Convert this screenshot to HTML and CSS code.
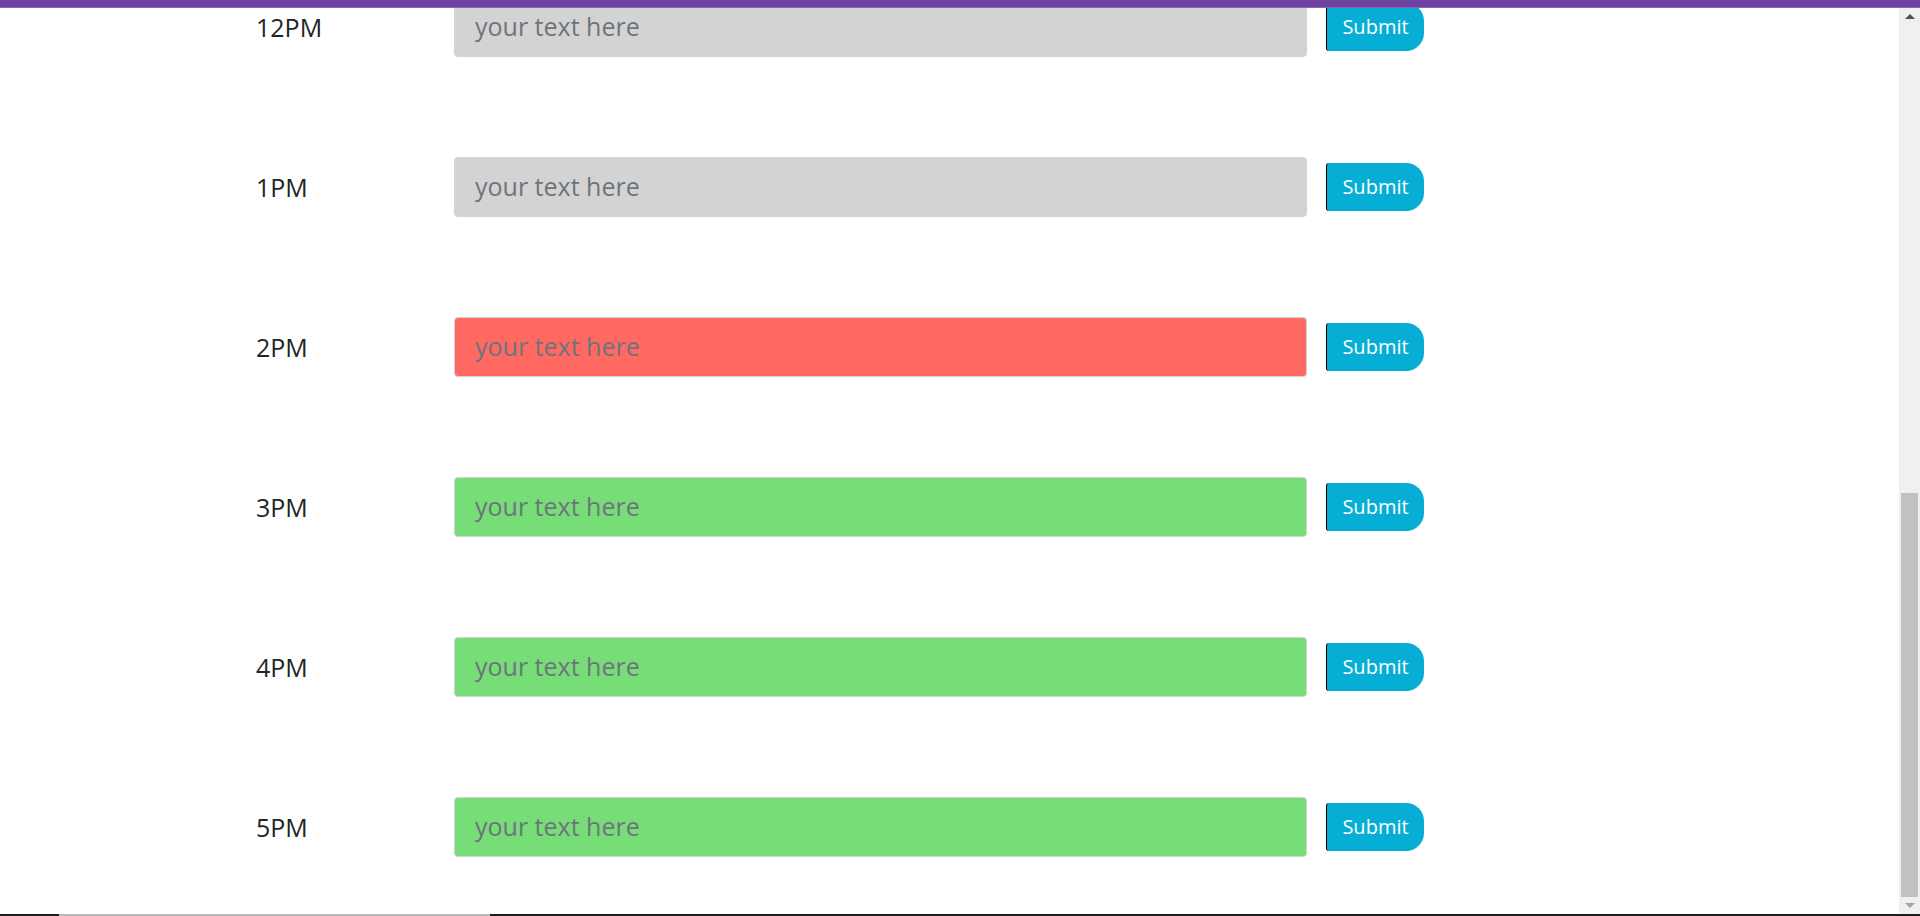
FILE: index.html
```html
<!DOCTYPE html>
<html lang="en">
<head>
<meta charset="utf-8">
<title>Work Day Scheduler</title>
<link rel="stylesheet" href="styles.css">
</head>
<body>
  <div class="topbar"></div>
  <div class="frame">
    <main class="viewport">
      <div class="schedule">
        <div class="time-block">
          <div class="hour">12PM</div>
          <textarea class="description past" placeholder="your text here"></textarea>
          <button class="saveBtn">Submit</button>
        </div>
        <div class="time-block">
          <div class="hour">1PM</div>
          <textarea class="description past" placeholder="your text here"></textarea>
          <button class="saveBtn">Submit</button>
        </div>
        <div class="time-block">
          <div class="hour">2PM</div>
          <textarea class="description present" placeholder="your text here"></textarea>
          <button class="saveBtn">Submit</button>
        </div>
        <div class="time-block">
          <div class="hour">3PM</div>
          <textarea class="description future" placeholder="your text here"></textarea>
          <button class="saveBtn">Submit</button>
        </div>
        <div class="time-block">
          <div class="hour">4PM</div>
          <textarea class="description future" placeholder="your text here"></textarea>
          <button class="saveBtn">Submit</button>
        </div>
        <div class="time-block">
          <div class="hour">5PM</div>
          <textarea class="description future" placeholder="your text here"></textarea>
          <button class="saveBtn">Submit</button>
        </div>
      </div>
    </main>
    <div class="scrollbar">
      <div class="sb-btn"><span class="arrow-up"></span></div>
      <div class="sb-track"><div class="sb-thumb"></div></div>
      <div class="sb-btn"><span class="arrow-down"></span></div>
    </div>
  </div>
  <div class="edge">
    <span class="seg dark seg-a"></span>
    <span class="seg light seg-b"></span>
    <span class="seg dark seg-c"></span>
  </div>
</body>
</html>
```

FILE: styles.css
```css
html, body {
  margin: 0;
  padding: 0;
  height: 916px;
  overflow: hidden;
  background: #ffffff;
}

body {
  display: flex;
  flex-direction: column;
  font-family: "Open Sans", "Noto Sans", sans-serif;
  color: #212529;
  line-height: 1;
}

.topbar {
  height: 8px;
  flex: none;
  background: #6f42a1;
  border-bottom: 1px solid #8a64b8;
  box-sizing: border-box;
}

.frame {
  flex: 1;
  display: flex;
  min-height: 0;
}

.viewport {
  flex: 1;
  overflow: hidden;
}

.schedule {
  margin-top: -61px;
  display: flex;
  flex-direction: column;
}

.time-block {
  height: 160px;
  display: flex;
  align-items: center;
}

.hour {
  width: 198px;
  margin-left: 256px;
  font-size: 25px;
}

.description {
  box-sizing: border-box;
  width: 853px;
  height: 60px;
  padding: 16px 20px 14px;
  border: 1px solid #ced4da;
  border-radius: 4px;
  font-family: "Open Sans", "Noto Sans", sans-serif;
  font-size: 25px;
  line-height: 1;
  resize: none;
  color: #495057;
  overflow: hidden;
}

.description::placeholder {
  color: #6c757d;
  opacity: 1;
}

.past { background: #d3d3d3; }
.present { background: #ff6961; }
.future { background: #77dd77; }

.saveBtn {
  box-sizing: border-box;
  margin-left: 19px;
  width: 98px;
  height: 48px;
  padding: 0 0 2px;
  border: none;
  border-left: 1px solid #000;
  border-radius: 3px 18px 18px 3px;
  background: #06aed5;
  color: #ffffff;
  font-family: "Open Sans", "Noto Sans", sans-serif;
  font-size: 20px;
  display: flex;
  align-items: center;
  justify-content: center;
}

.scrollbar {
  width: 21px;
  flex: none;
  background: #f0f0f0;
  display: flex;
  flex-direction: column;
}

.sb-btn {
  height: 17px;
  display: flex;
  align-items: center;
  justify-content: center;
  padding-left: 1px;
}

.arrow-up {
  width: 0;
  height: 0;
  border-left: 5px solid transparent;
  border-right: 5px solid transparent;
  border-bottom: 5px solid #505050;
}

.arrow-down {
  width: 0;
  height: 0;
  border-left: 5px solid transparent;
  border-right: 5px solid transparent;
  border-top: 5px solid #a3a3a3;
}

.sb-track {
  flex: 1;
  display: flex;
  flex-direction: column;
  justify-content: flex-end;
  padding: 0 2px 0 2px;
}

.sb-thumb {
  height: 404px;
  background: #c1c1c1;
}

.edge {
  height: 2px;
  flex: none;
  display: flex;
}

.seg { display: block; height: 2px; }
.dark { background: #1e1e1e; }
.light { background: #b9b9b9; }
.seg-a { width: 59px; }
.seg-b { width: 431px; }
.seg-c { flex: 1; }
```
